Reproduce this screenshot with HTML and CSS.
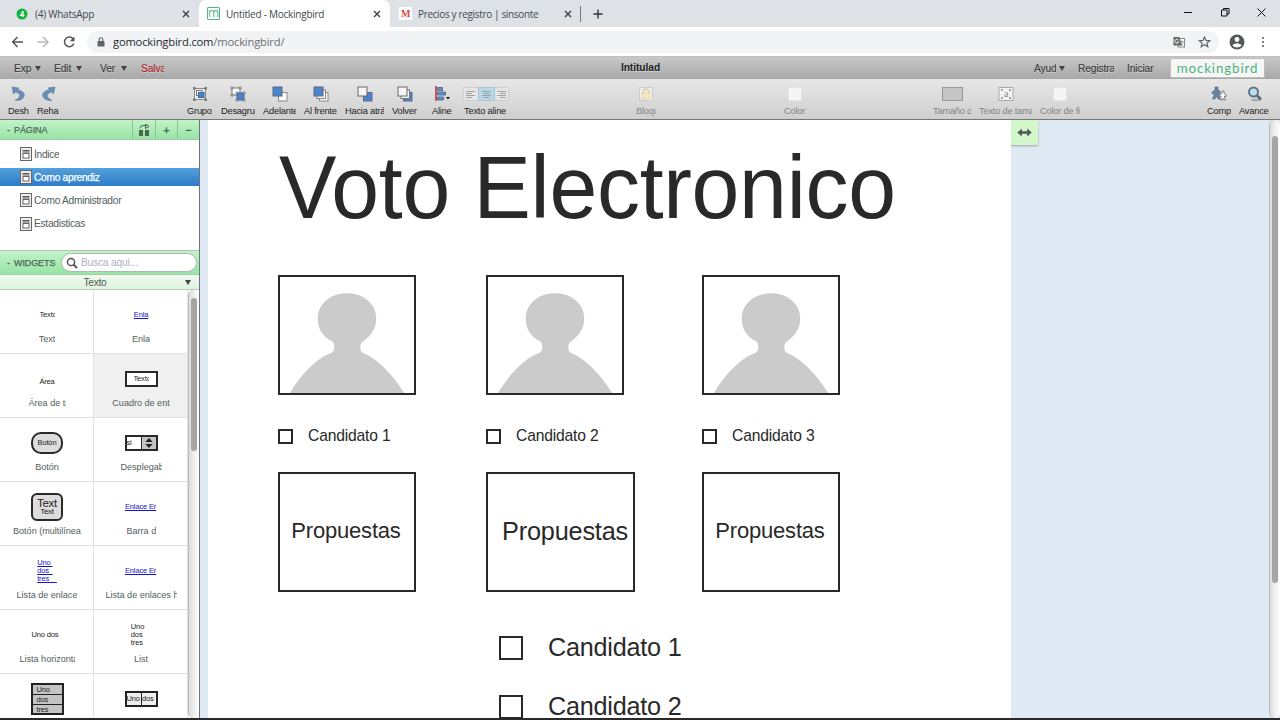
FILE: index.html
```html
<!DOCTYPE html>
<html lang="es">
<head>
<meta charset="utf-8">
<title>Untitled - Mockingbird</title>
<link rel="stylesheet" href="styles.css">
</head>
<body>
<svg class="defs" width="0" height="0">
  <symbol id="close" viewBox="0 0 8 8"><path d="M1 1l6 6M7 1L1 7" stroke="#3c4043" stroke-width="1.4" fill="none"/></symbol>
  <symbol id="doc" viewBox="0 0 12 14"><rect x=".5" y=".5" width="11" height="13" fill="#eee" stroke="#666"/><path d="M2.500 3.500h7M2.500 5h7" stroke="#555" stroke-width="1"/><rect x="3" y="6.500" width="6" height="4.500" fill="#fff" stroke="#666"/></symbol>
  <symbol id="person" viewBox="0 0 135 117"><path fill="#cbcbcb" d="M10 117C20 100 36 82 52 76.500Q54.500 75 54.500 70Q54.500 66.500 53 65C44 61 38 53 38 42C38 27 51 16.500 67.500 16.500S97 27 97 42C97 53 90 61 83 65Q81 67 81 70Q81 75 83 76.500C98 82 114 99 125 117Z"/></symbol>
</svg>
<div class="browser">
  <div class="tabs">
    <div class="tab tab-one">
      <svg class="fav" viewBox="0 0 12 12"><circle cx="6" cy="6" r="5.500" fill="#16b43f"/><text x="6" y="9" class="fav-num">4</text></svg>
      <span class="tab-name">(4) WhatsApp</span><svg class="x"><use href="#close"/></svg>
    </div>
    <div class="tab tab-two">
      <span class="fav-m">m</span><span class="tab-name">Untitled - Mockingbird</span><svg class="x"><use href="#close"/></svg>
    </div>
    <div class="tab tab-three">
      <span class="fav-red">M</span><span class="tab-name">Precios y registro | sinsonte</span><svg class="x"><use href="#close"/></svg>
    </div>
    <span class="tab-line"></span>
    <svg class="plus" viewBox="0 0 10 10"><path d="M5 .5v9M.5 5h9" stroke="#333" stroke-width="1.400"/></svg>
    <svg class="win" viewBox="0 0 84 12"><path d="M1 6.500h8" stroke="#111" stroke-width="1"/><path d="M38.500 4h5.500v6h-5.500zM40.500 4V2.500H46v5.500h-2" fill="none" stroke="#111"/><path d="M74.500 2.500l8 8M82.500 2.500l-8 8" stroke="#111" fill="none"/></svg>
  </div>
  <div class="address">
    <svg class="nav" viewBox="0 0 66 14" fill="none" stroke-width="1.500"><path d="M12 7H2M6.500 2L1.700 7l4.800 5" stroke="#555"/><path d="M26.500 7h10M32 2l5 5-5 5" stroke="#b5b7ba"/><path d="M62.300 4.200A4.800 4.800 0 1 0 62.800 8.500" stroke="#555"/><path d="M63.500 1.500v4.700h-4.700z" fill="#555"/></svg>
    <div class="pill">
      <svg class="lock" viewBox="0 0 8 10"><rect x=".5" y="4" width="7" height="5.500" rx=".7" fill="#5f6368"/><path d="M2.200 4V2.500a1.800 1.800 0 0 1 3.600 0V4" fill="none" stroke="#5f6368" stroke-width="1.100"/></svg>
      <span class="url">gomockingbird.com<span class="path">/mockingbird/</span></span>
      <svg class="pill-icons" viewBox="0 0 38 12"><rect x="5" y="2.500" width="6.500" height="8.500" fill="#fff" stroke="#85888c"/><path d="M6.500 5.500h4M8.500 4.500v1M10 6c-.5 2-2 3-3.500 3.500M7 6.500l3 3" stroke="#777" stroke-width=".8" fill="none"/><path d="M.5 1h6l2.300 8.500H.5z" fill="#66696d"/><path d="M5.500 4A2 2 0 1 0 5.700 6H4" fill="none" stroke="#fff" stroke-width=".9"/><path d="M31.500 1l1.500 3.400 3.700.3-2.800 2.400.9 3.600-3.300-1.900-3.300 1.900.9-3.600-2.800-2.400 3.700-.3z" fill="none" stroke="#5f6368" stroke-width="1.200"/></svg>
    </div>
    <svg class="me" viewBox="0 0 40 16"><circle cx="8" cy="8" r="7.500" fill="#54575b"/><circle cx="8" cy="5.500" r="2.400" fill="#fff"/><path d="M3.200 11.300Q8 7.300 12.800 11.300Q11 13.500 8 13.500T3.200 11.300z" fill="#fff"/><g fill="#5f6368"><circle cx="34" cy="4" r="1.100"/><circle cx="34" cy="8" r="1.100"/><circle cx="34" cy="12" r="1.100"/></g></svg>
  </div>
</div>
<div class="menubar">
  <div class="menu-left">
    <span class="menu m-exp">Exp</span><i class="tri"></i>
    <span class="menu m-edit">Edit</span><i class="tri"></i>
    <span class="menu m-ver">Ver</span><i class="tri"></i>
    <span class="menu m-save">Salva</span>
  </div>
  <strong class="doc-title">Intitulad</strong>
  <div class="menu-right">
    <span class="menu m-help">Ayud</span><i class="tri"></i>
    <span class="menu m-reg">Registra</span>
    <span class="menu m-in">Iniciar</span>
    <span class="brand">mockingbird</span>
  </div>
</div>
<div class="toolbar">
  <div class="tools g-undo">
    <div class="tool t-undo"><svg viewBox="0 0 16 16"><path d="M1 1l7 1-2 1.500C14 5 15 10 11 13Q9 14.500 4 14.500Q9 12 8.800 9.500Q8.500 7 4.500 6L2.500 8z" fill="#688fba" stroke="#4f6c8c" stroke-width=".5"/></svg><span>Desh</span></div>
    <div class="tool t-redo"><svg viewBox="0 0 16 16"><path d="M15 1L8 2l2 1.500C2 5 1 10 5 13q2 1.500 7 1.500Q7 12 7.200 9.500Q7.500 7 11.500 6l2 2z" fill="#688fba" stroke="#4f6c8c" stroke-width=".5"/></svg><span>Reha</span></div>
  </div>
  <div class="tools g-arrange">
    <div class="tool t-group"><svg viewBox="0 0 16 16"><rect x="2.500" y="2.500" width="11" height="11" fill="#eee" stroke="#888"/><rect x="4.500" y="4.500" width="5.500" height="5" fill="#fff" stroke="#777"/><rect x="6.500" y="6.500" width="5.500" height="5" fill="#4d82c3" stroke="#346aac"/><g fill="#777"><path d="M1 1h2.500v2.500H1zM12.500 1H15v2.500h-2.500zM1 12.500h2.500V15H1zM12.500 12.500H15V15h-2.500z"/></g></svg><span>Grupo</span></div>
    <div class="tool t-ungroup"><svg viewBox="0 0 16 16"><rect x="2" y="2" width="8" height="7" fill="#fff" stroke="#777"/><rect x="7" y="7" width="7" height="7" fill="#4d82c3" stroke="#346aac"/><path d="M1 1h2v2H1zM9 1h2v2H9zM1 8h2v2H1zM6 6h2v2H6zM13 6h2v2h-2zM6 13h2v2H6zM13 13h2v2h-2z" fill="#fff" stroke="#555" stroke-width=".7"/></svg><span>Desagrup</span></div>
    <div class="tool t-fwd"><svg viewBox="0 0 16 16"><rect x="6.500" y="6.500" width="8.500" height="8.500" fill="#fafafa" stroke="#888"/><rect x="1" y="1" width="9" height="9" fill="#4785d3" stroke="#667"/></svg><span>Adelante</span></div>
    <div class="tool t-front"><svg viewBox="0 0 16 16"><rect x="6.500" y="6.500" width="8.500" height="8.500" fill="#fafafa" stroke="#888"/><rect x="4" y="4" width="8.500" height="8.500" fill="#fafafa" stroke="#888"/><rect x="1" y="1" width="9" height="9" fill="#4785d3" stroke="#667"/></svg><span>Al frente</span></div>
    <div class="tool t-back"><svg viewBox="0 0 16 16"><rect x="6.500" y="6.500" width="8.500" height="8.500" fill="#4785d3" stroke="#668"/><rect x="1" y="1" width="9" height="9" fill="#f6f6f6" stroke="#666"/></svg><span>Hacia atrá</span></div>
    <div class="tool t-last"><svg viewBox="0 0 16 16"><rect x="6.500" y="6.500" width="8.500" height="8.500" fill="#4785d3" stroke="#668"/><rect x="4" y="4" width="8.500" height="8.500" fill="#fafafa" stroke="#777"/><rect x="1" y="1" width="9" height="9" fill="#f6f6f6" stroke="#666"/></svg><span>Volver</span></div>
  </div>
  <div class="tools g-align">
    <div class="tool t-align"><svg viewBox="0 0 16 16"><path d="M2 0v15" stroke="#c43b4c" stroke-width="1.700"/><path d="M3.500 1.500h5v3h-5zM3.500 6h8v3h-8zM3.500 11h6v3h-6z" fill="#5e91c8" stroke="#506a8b" stroke-width=".9"/><path d="M12 11h4l-2 2.500z" fill="#111"/></svg><span>Aline</span></div>
    <div class="tool t-text"><svg class="seg" viewBox="0 0 46 16"><rect x=".5" y="1.500" width="45" height="13" fill="#e6e6e6" stroke="#d0d0d0"/><rect x="15.500" y="1.500" width="16" height="13" fill="#b9d9e9" stroke="#a6c4d4"/><path d="M3 5.500h9M3 7.500h6M3 9.500h9M3 11.500h6M19 5.500h9M20.500 7.500h6M19 9.500h9M20.500 11.500h6M34 5.500h9M37 7.500h6M34 9.500h9M37 11.500h6" stroke="#979c9f" stroke-width=".9"/></svg><span>Texto aline</span></div>
  </div>
  <div class="tools g-lock off"><div class="tool t-lock"><svg viewBox="0 0 16 16"><rect x="1.500" y="1.500" width="13" height="13" fill="#eee" stroke="#ccc"/><path d="M5.500 8V5.500a2.500 2.500 0 0 1 5 0V8" fill="none" stroke="#d8cfaa" stroke-width="1.300"/><rect x="4" y="7" width="8" height="6" fill="#f5e9bd" stroke="#ddd0a0" stroke-width=".7"/></svg><span>Bloqu</span></div></div>
  <div class="tools g-color off"><div class="tool t-color"><svg viewBox="0 0 16 16"><rect x="1.500" y="1.500" width="13" height="13" fill="#f5f5f5" stroke="#e4e4e4"/></svg><span>Color</span></div></div>
  <div class="tools g-style off">
    <div class="tool t-size"><svg class="wide" viewBox="0 0 21 16"><rect x=".5" y="1.500" width="20" height="13" fill="#c5c5c5" stroke="#999"/></svg><span>Tamaño d</span></div>
    <div class="tool t-fit"><svg viewBox="0 0 16 16"><rect x="1" y="1.500" width="14" height="13" fill="#f4f4f4" stroke="#aaa"/><path d="M3 4h2M11 4h2M3 12h2M11 12h2" stroke="#888" stroke-width="1.500"/><text x="8" y="11" class="fit-a">a</text></svg><span>Texto de tama</span></div>
    <div class="tool t-fill"><svg viewBox="0 0 16 16"><rect x="1.500" y="1.500" width="13" height="13" fill="#f5f5f5" stroke="#e4e4e4"/></svg><span>Color de fi</span></div>
  </div>
  <div class="tools g-end">
    <div class="tool t-share"><svg viewBox="0 0 16 16"><path d="M4 1h3v3l2 1v3L7.500 7v2L9 13H7L5.500 10 4 13H1.500L3 9V7L1 8V6l3-2z" fill="#66829f" stroke="#536b84" stroke-width=".6"/><path d="M11 5h2v2.500l2 1v2l-1.500-.5v1.500l1 2.500h-2l-.7-2-.8 2H9l1-2.500V10l-1.500.5v-2L11 7.500z" fill="#fff" stroke="#666" stroke-width=".8"/></svg><span>Comp</span></div>
    <div class="tool t-prev"><svg viewBox="0 0 16 16"><ellipse cx="9" cy="14" rx="5" ry="1.200" fill="#aaa"/><circle cx="6.500" cy="6" r="4.500" fill="#bddcf1" stroke="#647487" stroke-width="2"/><path d="M10 9.500l4 4" stroke="#5d6670" stroke-width="2.500"/></svg><span>Avance</span></div>
  </div>
</div>
<div class="work">
  <aside class="side">
    <div class="head pages-head">
      <span class="dash">-</span><span class="head-name">PÁGINA</span>
      <div class="btn"><svg viewBox="0 0 12 12"><path d="M1 6h4v6H1zM7 6h4v6H7z" fill="#4c6654"/><path d="M2 4.500Q2 1.500 5 1.500h3.500M7.500 0v4.500L11 2.500z" stroke="#4c6654" fill="none"/></svg></div>
      <div class="btn">+</div><div class="btn">−</div>
    </div>
    <ul class="pages">
      <li><svg><use href="#doc"/></svg><span class="p-index">Índice</span></li>
      <li class="on"><svg><use href="#doc"/></svg><span>Como aprendiz</span></li>
      <li><svg><use href="#doc"/></svg><span>Como Administrador</span></li>
      <li><svg><use href="#doc"/></svg><span>Estadisticas</span></li>
    </ul>
    <div class="head widgets-head"><span class="dash">-</span><span class="head-name">WIDGETS</span>
      <div class="search"><svg viewBox="0 0 12 12"><circle cx="5" cy="5" r="3.600" fill="none" stroke="#555" stroke-width="1.500"/><path d="M7.500 7.500l3.500 3.500" stroke="#555" stroke-width="2"/></svg><span>Busca aquí...</span></div>
    </div>
    <div class="category"><span>Texto</span><i class="tri"></i></div>
    <div class="lib">
      <div class="widgets">
        <div class="w"><div class="pic"><span class="tiny clip c15">Texto</span></div><span class="cap">Text</span></div>
        <div class="w"><div class="pic"><span class="tiny link">Enla</span></div><span class="cap">Enla</span></div>
        <div class="w"><div class="pic low"><span class="tiny">Área</span></div><span class="cap c37">Área de te</span></div>
        <div class="w hover"><div class="pic"><div class="input"><span class="tiny clip c15">Texto</span></div></div><span class="cap">Cuadro de ent</span></div>
        <div class="w"><div class="pic"><div class="round tiny">Botón</div></div><span class="cap">Botón</span></div>
        <div class="w"><div class="pic"><div class="drop"><span class="tiny">si</span><svg viewBox="0 0 14 13"><path d="M7 1l4 4.500H3zM7 12l4-4.500H3z" fill="#222"/></svg></div></div><span class="cap c41">Desplegab</span></div>
        <div class="w"><div class="pic"><div class="multi"><span>Text</span><small>Text</small></div></div><span class="cap c67">Botón (multilínea)</span></div>
        <div class="w"><div class="pic"><span class="tiny link clip c32">Enlace Er</span></div><span class="cap c29">Barra de</span></div>
        <div class="w"><div class="pic"><div class="tiny link stack">Uno&nbsp;<br>dos&nbsp;&nbsp;<br>tres&nbsp;&nbsp;&nbsp;&nbsp;</div></div><span class="cap">Lista de enlace</span></div>
        <div class="w"><div class="pic"><span class="tiny link clip c32">Enlace Er</span></div><span class="cap c70">Lista de enlaces h</span></div>
        <div class="w"><div class="pic left-s"><span class="tiny">Uno dos</span></div><span class="cap c54">Lista horizonta</span></div>
        <div class="w"><div class="pic left"><div class="tiny stack">Uno<br>dos<br>tres</div></div><span class="cap">List</span></div>
        <div class="w"><div class="pic"><div class="table tiny"><span>Uno</span><span>dos</span><span>tres</span></div></div></div>
        <div class="w"><div class="pic"><div class="split tiny"><span>Uno</span><span>dos</span></div></div></div>
      </div>
      <div class="track"><div class="thumb side-thumb"></div></div>
    </div>
  </aside>
  <main class="canvas">
    <div class="page">
      <div class="item title">Voto Electronico</div>
      <div class="item photo x1"><svg><use href="#person"/></svg></div>
      <div class="item photo x2"><svg><use href="#person"/></svg></div>
      <div class="item photo x3"><svg><use href="#person"/></svg></div>
      <div class="item check x1"><i></i><span>Candidato 1</span></div>
      <div class="item check x2"><i></i><span>Candidato 2</span></div>
      <div class="item check x3"><i></i><span>Candidato 3</span></div>
      <div class="item box x1">Propuestas</div>
      <div class="item box big x2">Propuestas</div>
      <div class="item box x3">Propuestas</div>
      <div class="item check large y1"><i></i><span>Candidato 1</span></div>
      <div class="item check large y2"><i></i><span>Candidato 2</span></div>
    </div>
    <div class="resize"><svg viewBox="0 0 16 10"><path d="M0 5l5-4.500v3h6v-3L16 5l-5 4.500v-3H5v3z" fill="#555"/></svg></div>
    <div class="track main-track"><div class="thumb main-thumb"></div></div>
  </main>
</div>
<div class="bottom"></div>
</body>
</html>
```

FILE: styles.css
```css
* { box-sizing: border-box; }
body { margin: 0; width: 1280px; height: 720px; overflow: hidden; display: flex; flex-direction: column; font-family: "Liberation Sans", Arial, sans-serif; font-size: 10.2px; letter-spacing: -.28px; color: #444; background: #fff; }
svg { display: block; flex: none; }
.defs { position: absolute; }
.browser { font-family: "Open Sans", "Noto Sans", sans-serif; height: 56px; flex: none; letter-spacing: 0; }
.tabs { height: 27px; background: #dee1e6; display: flex; align-items: center; }
.tab { height: 27px; display: flex; align-items: center; color: #45494d; white-space: nowrap; font-size: 10px; letter-spacing: -.25px; }
.tab-name { flex: 1; }
.tab-one { width: 199px; padding: 0 9px 0 16px; }
.tab-two { width: 191px; padding: 0 9px 0 8px; background: #fff; border-radius: 7px 7px 0 0; }
.tab-three { width: 190px; padding: 0 8px 0 8px; letter-spacing: -.55px; letter-spacing: -.35px; }
.fav { width: 12px; height: 12px; margin-right: 7px; }
.fav-num { font: bold 8px "Open Sans", sans-serif; fill: #fff; text-anchor: middle; }
.fav-m { width: 13px; height: 13px; margin-right: 6px; border: 1px solid #55b58a; border-radius: 1px; color: #4db585; font-size: 12px; line-height: 9px; text-align: center; }
.fav-red { width: 13px; height: 13px; margin: 0 6px 0 1px; background: #fff; color: #d44a45; font: bold 10px/13px "Liberation Serif", serif; text-align: center; }
.x { width: 8px; height: 8px; }
.tab-line { width: 1px; height: 16px; background: #777; }
.plus { width: 10px; height: 10px; margin-left: 12px; }
.win { width: 84px; height: 12px; margin-left: auto; margin-right: 13px; margin-top: -3px; }
.address { height: 29px; display: flex; align-items: center; background: #fff; }
.nav { width: 66px; height: 14px; margin-left: 11px; }
.pill { width: 1132px; height: 22px; margin-left: 10px; border-radius: 11px; background: #f1f3f4; display: flex; align-items: center; padding-left: 10px; }
.lock { width: 8px; height: 10px; }
.url { margin-left: 8px; font-size: 11.200px; letter-spacing: -.18px; color: #26292c; }
.path { color: #6b6f74; }
.pill-icons { width: 38px; height: 12px; margin-left: auto; margin-right: 8px; }
.me { width: 40px; height: 16px; margin-left: 10px; }

.menubar { height: 23px; flex: none; display: grid; grid-template-columns: 500px 281px 499px; align-items: center; background: linear-gradient(#c9c9c9, #a8a8a8); border-top: 1px solid #bfbfbf; }
.menu-left, .menu-right { display: flex; align-items: center; }
.menu-right { justify-content: flex-end; padding-right: 15px; }
.menu { overflow: hidden; white-space: nowrap; color: #3d3d3d; text-shadow: 0 1px 0 rgba(255,255,255,.4); line-height: 13px; padding-top: 1px; -webkit-text-stroke: .15px; letter-spacing: -.1px; }
.tri { flex: none; width: 0; height: 0; border: 3px solid transparent; border-top: 5px solid #444; border-bottom: 0; }
.m-exp { margin-left: 14px; width: 18px; margin-right: 3px; }
.m-edit { margin-left: 13px; width: 19px; margin-right: 3px; }
.m-ver { margin-left: 18px; width: 16px; margin-right: 5px; }
.m-save { margin-left: 14px; width: 23px; color: #b3262d; }
.doc-title { text-align: center; color: #222; line-height: 20px; text-shadow: 0 1px 0 rgba(255,255,255,.4); letter-spacing: -.05px; }
.m-help { width: 22px; margin-right: 3px; }
.m-reg { width: 36px; margin-left: 13px; }
.m-in { width: 29px; margin: 0 14px 0 13px; }
.brand { width: 95px; height: 20px; border: 1px solid #bdbdbd; background: #f6f6f6; color: #4cb07f; text-align: center; font: 13.300px/18px Lato, sans-serif; letter-spacing: .9px; }

.toolbar { height: 41px; flex: none; display: flex; background: linear-gradient(#e7e7e7, #cfcfcf); border-bottom: 1px solid #777; padding-top: 7px; }
.tools { display: flex; gap: 8px; }
.tool { display: flex; flex-direction: column; align-items: center; font-size: 9.300px; letter-spacing: -.22px; color: #222; }
.tool svg { width: 16px; height: 16px; }
.tool span { width: 100%; overflow: hidden; white-space: nowrap; line-height: 12px; margin-top: 3px; }
.tool .seg { width: 46px; }
.tool .wide { width: 21px; }
.off .tool { color: #858585; }
.fit-a { font: 10px "Liberation Serif", serif; fill: #888; text-anchor: middle; }
.g-undo { margin-left: 8px; }
.t-undo { width: 21px; }
.t-redo { width: 22px; }
.g-arrange { margin-left: 128px; }
.t-group { width: 26px; }
.t-ungroup { width: 34px; }
.t-fwd, .t-front { width: 33px; }
.t-back { width: 39px; }
.t-last { width: 26px; }
.g-align { margin-left: 14px; gap: 12px; }
.t-align { width: 20px; }
.t-text { width: 44px; }
.g-lock { margin-left: 128px; }
.t-lock { width: 20px; }
.g-color { margin-left: 128px; }
.t-color { width: 22px; }
.g-style { margin-left: 127px; }
.t-size { width: 38px; }
.t-fit { width: 53px; }
.t-fill { width: 40px; }
.g-end { margin-left: 127px; }
.t-share { width: 24px; }
.t-prev { width: 31px; }

.work { height: 598px; flex: none; display: flex; overflow: hidden; }
.side { width: 200px; flex: none; border-right: 1px solid #6e7478; display: flex; flex-direction: column; }
.head { flex: none; display: flex; align-items: center; background: linear-gradient(#c1f3c8, #98e4a5); border-bottom: 1px solid #a8c9ad; color: #4c6654; font-size: 9px; letter-spacing: 0; padding-left: 7px; }
.dash { font-weight: bold; width: 7px; }
.head-name { -webkit-text-stroke: .25px #4c6654; width: 42px; letter-spacing: -.1px; }
.pages-head { height: 20px; }
.pages-head .head-name { flex: 1; }
.btn { width: 23px; height: 19px; border-left: 1px solid #86c692; display: flex; align-items: center; justify-content: center; font-weight: bold; font-size: 11px; }
.btn + .btn { width: 22px; }
.btn svg { width: 12px; height: 12px; }
.pages { list-style: none; margin: 0; padding: 5px 0 0; height: 110px; color: #53605b; }
.pages li { height: 18px; margin-bottom: 5.200px; padding-left: 20px; display: flex; align-items: center; gap: 2px; white-space: nowrap; }
.pages svg { width: 12px; height: 14px; }
.pages .on { background: linear-gradient(#54a0dc, #2d7bc9); color: #fff; -webkit-text-stroke: .25px #fff; }
.p-index { width: 25px; overflow: hidden; }
.widgets-head { height: 25px; border-top: 1px solid #b5bdb6; }
.search { width: 136px; height: 19px; margin-left: 5px; border: 1px solid #a9bbaa; border-radius: 10px; background: #fff; display: flex; align-items: center; padding-left: 4px; gap: 3px; color: #aab3bd; font-size: 10.200px; letter-spacing: -.2px; }
.search svg { width: 12px; height: 12px; }
.category { height: 15px; flex: none; background: linear-gradient(#f0fbf0, #dff3e0); border-bottom: 1px solid #bcc9bd; display: flex; align-items: center; padding: 0 8px 0 0; color: #4e5a53; }
.category span { flex: 1; text-align: center; padding-left: 5px; line-height: 13px; }
.lib { display: flex; height: 428px; overflow: hidden; }
.widgets { width: 188px; display: grid; grid-template-columns: 94px 94px; grid-auto-rows: 64px; }
.w { border-right: 1px solid #e2e2e2; border-bottom: 1px solid #e2e2e2; display: flex; flex-direction: column; align-items: center; min-width: 0; padding-left: 1px; }
.hover { background: #f0f0f0; }
.pic { height: 49px; flex: none; display: flex; align-items: center; justify-content: center; }
.low { padding-top: 7px; }
.left { padding-right: 7px; }
.left-s { padding-right: 4px; }
.cap { font-size: 9.100px; line-height: 11px; margin-top: -5px; color: #53605b; overflow: hidden; white-space: nowrap; letter-spacing: -.02px; }
.tiny { font-size: 7.500px; line-height: 8px; color: #222; letter-spacing: -.15px; }
.clip { overflow: hidden; white-space: nowrap; }
.link { color: #1515cf; text-decoration: underline; }
.c15 { width: 15px; } .c29 { width: 29px; } .c32 { width: 32px; } .c37 { width: 37px; } .c41 { width: 41px; } .c54 { width: 55px; } .c67 { width: 68px; } .c70 { width: 71px; }
.input { width: 33px; height: 16px; border: 2px solid #292929; background: #fff; display: flex; align-items: center; justify-content: center; }
.round { width: 32px; height: 22px; border: 2px solid #292929; border-radius: 10px; background: #ddd; display: flex; align-items: center; justify-content: center; }
.drop { width: 33px; height: 16px; border: 2px solid #292929; background: #fff; display: flex; align-items: center; justify-content: space-between; }
.drop svg { width: 15px; height: 12px; background: #c4c4c4; border-left: 1px solid #292929; }
.multi { width: 32px; height: 28px; border: 2px solid #292929; border-radius: 6px; background: #ddd; display: flex; flex-direction: column; align-items: center; justify-content: center; color: #222; font-size: 11.500px; line-height: 10px; }
.multi small { font-size: 8px; line-height: 7px; }
.table { width: 33px; height: 32px; border: 2px solid #222; background: #c4c4c4; display: grid; grid-template-rows: repeat(3, 1fr); }
.table span { border-bottom: 1px solid #222; padding-left: 4px; line-height: 9px; }
.table span:last-child { border-bottom: 0; }
.split { width: 33px; height: 16px; border: 2px solid #222; background: #eee; display: grid; grid-template-columns: 1fr 1fr; line-height: 12px; }
.split span + span { border-left: 1px solid #222; }
.track { width: 11px; border-left: 1px solid #bbb; border-radius: 6px; padding: 8px 2px; background: linear-gradient(90deg, #ddd, #fff); }
.thumb { background: #a5a5a5; border-radius: 4px; width: 6px; }
.side-thumb { height: 153px; }

.canvas { flex: 1; display: flex; background: #e0eaf4; padding-left: 8px; min-width: 0; letter-spacing: 0; }
.page { position: relative; width: 803px; background: #fff; overflow: hidden; color: #292929; }
.item { position: absolute; white-space: nowrap; }
.title { left: 71px; top: 25px; font-size: 86px; line-height: 86px; letter-spacing: -.3px; transform: scaleY(1.035); transform-origin: 0 73px; }
.x1 { left: 70px; } .x2 { left: 278px; } .x3 { left: 494px; }
.photo { top: 155px; width: 138px; height: 120px; border: 2px solid #292929; }
.photo svg { width: 134px; height: 116px; }
.check { display: flex; align-items: center; gap: 15px; font-size: 15.700px; letter-spacing: -.2px; line-height: 18px; }
.check.x1, .check.x2, .check.x3 { top: 307px; }
.check i { width: 15px; height: 15px; border: 2px solid #292929; margin-top: 1px; }
.box { top: 352px; width: 138px; height: 120px; border: 2px solid #292929; font-size: 22px; letter-spacing: -.2px; text-align: center; line-height: 114px; padding-right: 2px; }
.big { width: 149px; font-size: 25.300px; padding-left: 9px; padding-right: 0; }
.check.large { left: 291px; gap: 25px; font-size: 25.200px; letter-spacing: -.22px; line-height: 28px; }
.large i { width: 24px; height: 24px; }
.y1 { top: 513px; } .y2 { top: 572px; }
.resize { width: 27px; height: 25px; background: #d2f7ca; box-shadow: 0 1px 2px rgba(0,0,0,.3); display: flex; align-items: center; justify-content: center; }
.resize svg { width: 15px; height: 9px; }
.main-track { margin-left: auto; padding-top: 16px; }
.main-thumb { height: 447px; }
.bottom { height: 2px; background: #292929; }
```
